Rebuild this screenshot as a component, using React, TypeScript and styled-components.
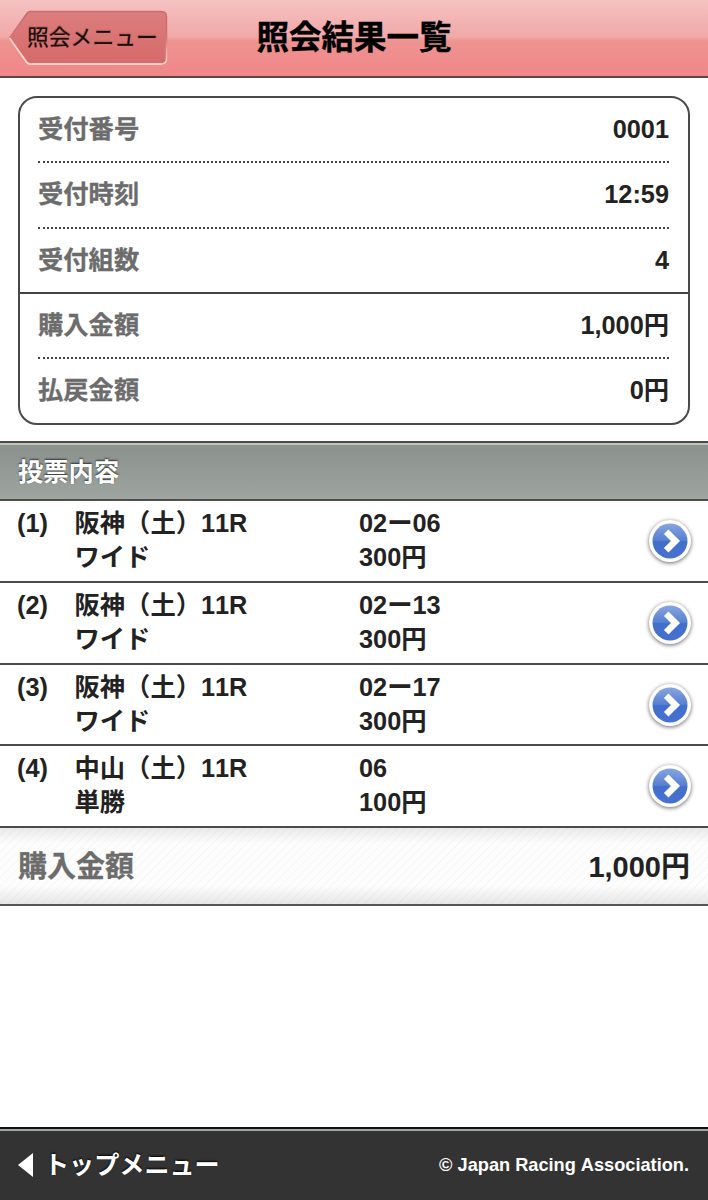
import React from "react";
import styled, { createGlobalStyle } from "styled-components";

const GlobalStyle = createGlobalStyle`
  * { box-sizing: border-box; }
  body {
    margin: 0;
    background: #fff;
    color: #222;
    font-family: "Liberation Sans", "Noto Sans CJK JP", sans-serif;
    font-weight: 700;
    font-kerning: none;
  }
`;

const Page = styled.div`
  display: flex;
  flex-direction: column;
  width: 100%;
  height: 1200px;
  overflow: hidden;
`;

const Header = styled.header`
  display: grid;
  grid-template-columns: 168px 1fr 168px;
  height: 78px;
  flex: none;
  border-bottom: 2px solid #5c4545;
  background: linear-gradient(#f5c2c2 0, #f1a8a8 37px, #ee9391 41px, #f08787 76px);
`;

const BackButton = styled.a`
  position: relative;
  display: block;
  height: 76px;
  color: #1c0c0c;
  font-size: 21.8px;
  font-weight: 400;
  -webkit-text-stroke: 0.2px #1c0c0c;
  line-height: 76px;
  padding-left: 27px;
  white-space: nowrap;
  text-shadow: 0 -1px 1px rgba(90, 70, 50, 0.4);
`;

const BackShape = styled.svg`
  position: absolute;
  left: 0;
  top: 0;
`;

const BackLabel = styled.span`
  position: relative;
`;

const Title = styled.h1`
  margin: 0;
  color: #000;
  text-align: center;
  font-size: 32.5px;
  line-height: 76px;
  -webkit-text-stroke: 0.4px #000;
`;

const Card = styled.section`
  flex: none;
  margin: 18px 18px 0;
  height: 329px;
  border: 2px solid #4b4a4b;
  border-radius: 19px;
`;

const CardGroup = styled.div<{ $ruled?: boolean }>`
  padding: 0 19px 0 18px;
  border-bottom: ${(p) => (p.$ruled ? "2px solid #444" : "0")};
`;

const CardRow = styled.div<{ $last?: boolean }>`
  display: flex;
  justify-content: space-between;
  height: ${(p) => (p.$last ? "63.5px" : "65.25px")};
  border-bottom: ${(p) => (p.$last ? "0" : "2px dotted #444")};
  font-size: 25.3px;
  line-height: 62px;
`;

const Label = styled.span`
  color: #6c6c6c;
  -webkit-text-stroke: 0.3px #6c6c6c;
`;

const SectionBar = styled.h2`
  flex: none;
  margin: 16px 0 0;
  height: 60px;
  padding-left: 18px;
  border-top: 2px solid #4b4b4b;
  border-bottom: 2px solid #4b504d;
  background: linear-gradient(#8a918d, #9ea4a0);
  box-shadow: inset 0 2px 0 #c0c5c2;
  color: #fff;
  font-size: 25.3px;
  line-height: 58px;
  text-shadow: 0 -1px 2px rgba(0, 0, 0, 0.7);
`;

const BetRow = styled.div`
  display: grid;
  grid-template-columns: 58px 284px 1fr 44px;
  flex: none;
  height: 81.8px;
  padding: 5px 16px 0 17px;
  border-bottom: 2px solid #4b4b4b;
  font-size: 25.3px;
  line-height: 34px;
`;

const Race = styled.div`
  margin-left: -0.5px;
`;

const Arrow = styled.svg`
  align-self: start;
  margin-top: 13px;
  overflow: visible;
  filter: drop-shadow(0 1px 2px rgba(0, 0, 0, 0.6));
`;

const Total = styled.div`
  display: flex;
  justify-content: space-between;
  flex: none;
  height: 78px;
  padding: 0 18px 0 18px;
  border-bottom: 2px solid #555;
  background:
    linear-gradient(rgba(0, 0, 0, 0.08), transparent 20%, transparent 76%, rgba(0, 0, 0, 0.09)),
    repeating-linear-gradient(135deg, #fdfdfd 0 4.5px, #f4f4f4 5.2px, #fdfdfd 6px);
  font-size: 29px;
  line-height: 78px;
`;

const Footer = styled.footer`
  display: flex;
  justify-content: space-between;
  align-items: center;
  flex: none;
  height: 73px;
  margin-top: auto;
  padding: 0 19px 0 18px;
  border-top: 2px solid #111;
  background: #333;
  box-shadow: inset 0 2px 0 #9fa6a2;
  color: #fff;
`;

const TopLink = styled.a`
  display: flex;
  align-items: center;
  gap: 11px;
  font-size: 25.1px;
  line-height: 66px;
  text-shadow: 0 -1px 2px #000;
`;

const Copyright = styled.small`
  padding-top: 2px;
  font-size: 18.2px;
`;

const bets = [
  { race: "阪神（土）11R", kind: "ワイド", pick: "02ー06", price: "300円" },
  { race: "阪神（土）11R", kind: "ワイド", pick: "02ー13", price: "300円" },
  { race: "阪神（土）11R", kind: "ワイド", pick: "02ー17", price: "300円" },
  { race: "中山（土）11R", kind: "単勝", pick: "06", price: "100円" },
];

function InfoRow({ label, value, last }: { label: string; value: string; last?: boolean }) {
  return (
    <CardRow $last={last}>
      <Label>{label}</Label>
      <span>{value}</span>
    </CardRow>
  );
}

function DetailArrow() {
  return (
    <Arrow width="44" height="44" viewBox="0 0 44 44">
      <defs>
        <linearGradient id="blue" x1="0" y1="0" x2="0" y2="1">
          <stop offset="0" stopColor="#88a5e0" />
          <stop offset="0.48" stopColor="#5680d2" />
          <stop offset="0.52" stopColor="#416fcc" />
          <stop offset="1" stopColor="#4770cf" />
        </linearGradient>
      </defs>
      <circle cx="22" cy="22" r="21" fill="#fff" />
      <circle cx="22" cy="22" r="17.5" fill="url(#blue)" />
      <path d="M18.200 12.700 L27.500 22 L18.200 31.300" fill="none" stroke="#fff" strokeWidth="6.400" />
    </Arrow>
  );
}

export default function App() {
  return (
    <Page lang="ja">
      <GlobalStyle />
      <Header>
        <BackButton>
          <BackShape width="170" height="76" viewBox="0 0 170 76">
            <defs>
              <linearGradient id="back" x1="0" y1="0" x2="0" y2="1">
                <stop offset="0" stopColor="#dc7d7d" />
                <stop offset="1" stopColor="#d66a6a" />
              </linearGradient>
              <linearGradient id="edge" x1="0" y1="0" x2="0" y2="1">
                <stop offset="0" stopColor="#c76c6c" />
                <stop offset="0.5" stopColor="#d07474" />
                <stop offset="0.8" stopColor="#f0b8b0" />
                <stop offset="1" stopColor="#fbd8d0" />
              </linearGradient>
            </defs>
            <path
              d="M30 11.5 H161 Q166.500 11.500 166.500 17 V58.500 Q166.500 64 161 64 H30 Q28 64 26.500 62 L9.500 38 L26.500 14 Q28 11.500 30 11.500 Z"
              fill="url(#back)"
              stroke="url(#edge)"
              strokeWidth="1.500"
            />
            <path d="M9.500 38 L26.500 62 Q28 64 30 64 H161" fill="none" stroke="#fbd8d0" strokeWidth="1.500" />
          </BackShape>
          <BackLabel>照会メニュー</BackLabel>
        </BackButton>
        <Title>照会結果一覧</Title>
      </Header>
      <Card>
        <CardGroup $ruled>
          <InfoRow label="受付番号" value="0001" />
          <InfoRow label="受付時刻" value="12:59" />
          <InfoRow label="受付組数" value="4" last />
        </CardGroup>
        <CardGroup>
          <InfoRow label="購入金額" value="1,000円" />
          <InfoRow label="払戻金額" value="0円" last />
        </CardGroup>
      </Card>
      <SectionBar>投票内容</SectionBar>
      {bets.map((bet, i) => (
        <BetRow key={i}>
          <span>({i + 1})</span>
          <Race>
            <div>{bet.race}</div>
            <div>{bet.kind}</div>
          </Race>
          <div>
            <div>{bet.pick}</div>
            <div>{bet.price}</div>
          </div>
          <DetailArrow />
        </BetRow>
      ))}
      <Total>
        <Label>購入金額</Label>
        <span>1,000円</span>
      </Total>
      <Footer>
        <TopLink>
          <svg width="15" height="24" viewBox="0 0 15 24">
            <path d="M15 0 V24 L0 12 Z" fill="#fff" />
          </svg>
          トップメニュー
        </TopLink>
        <Copyright>© Japan Racing Association.</Copyright>
      </Footer>
    </Page>
  );
}
